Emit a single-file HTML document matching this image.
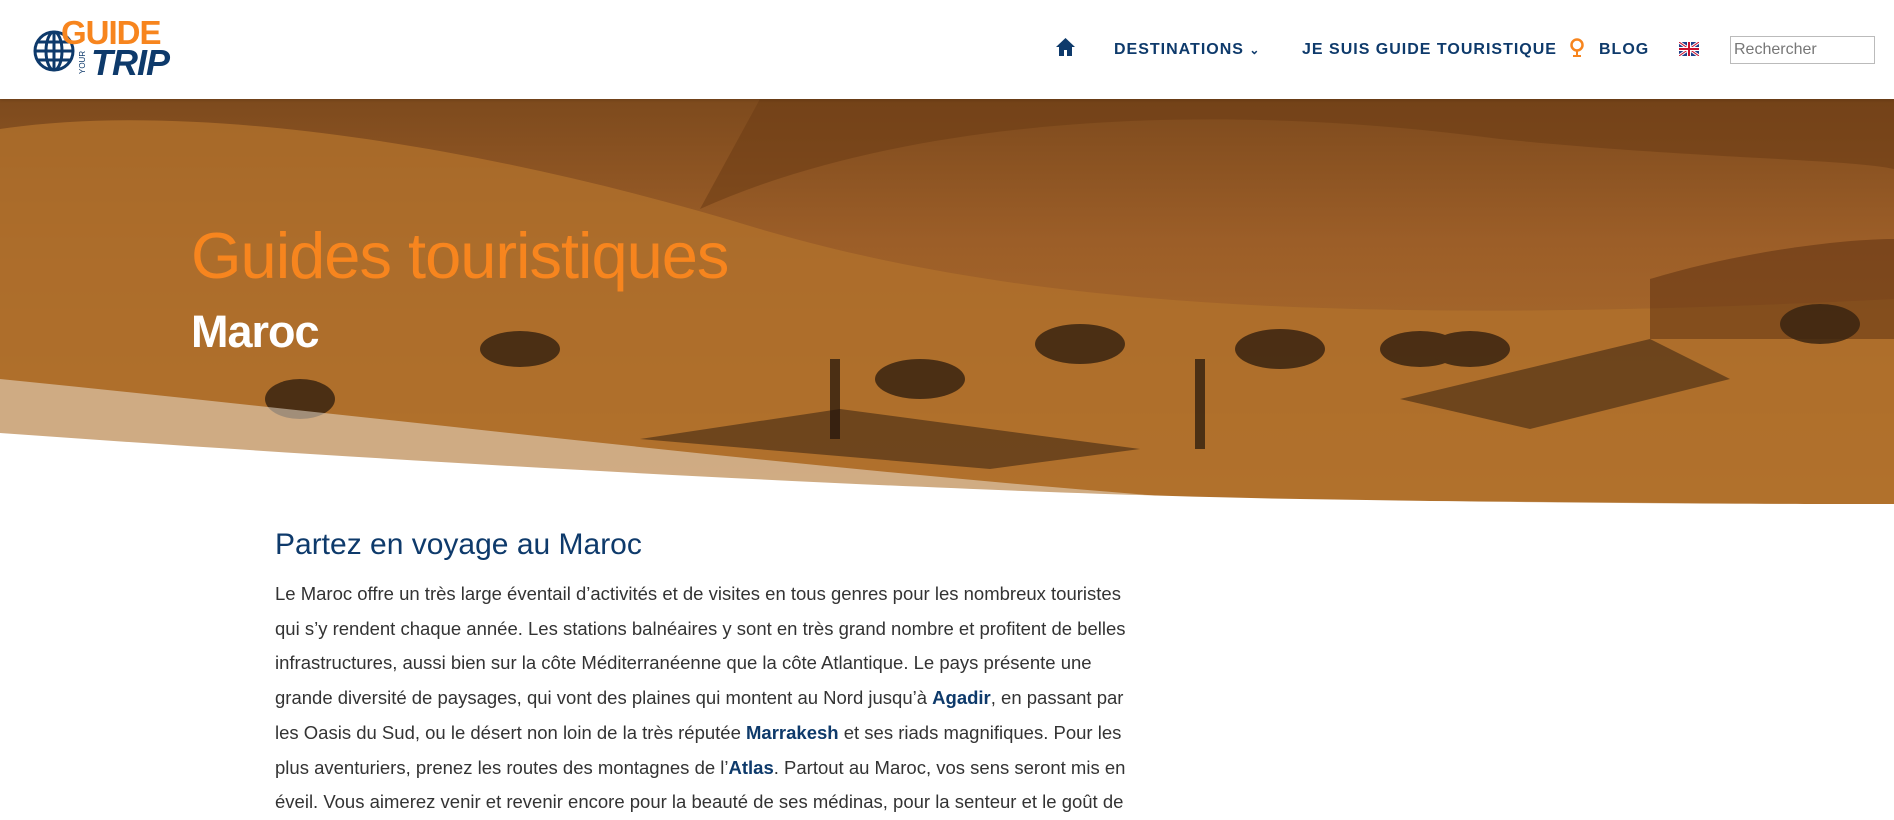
<!DOCTYPE html>
<html><head><meta charset="utf-8"><style>
*{margin:0;padding:0;box-sizing:border-box}
body{width:1894px;height:800px;overflow:hidden;background:#fff;font-family:"Liberation Sans",sans-serif;position:relative}
.hdr{position:absolute;left:0;top:0;width:1894px;height:99px;background:#fff;box-shadow:0 1px 3px rgba(0,0,0,.15);z-index:2}
.nav{position:absolute;top:41px;font-size:16px;font-weight:bold;letter-spacing:1px;color:#0e3a6b;white-space:nowrap}
.hero{position:absolute;left:0;top:99px;width:1894px;height:406px}
h1{position:absolute;left:191px;top:218px;font-size:65px;font-weight:normal;color:#f7851e;letter-spacing:-1px}
h2.m{position:absolute;left:191px;top:306px;font-size:45px;font-weight:bold;color:#fff;letter-spacing:-1px}
h3{position:absolute;left:275px;top:528px;font-size:30px;font-weight:normal;color:#0e3a6b}
p{position:absolute;left:275px;top:577px;width:870px;font-size:18.5px;line-height:34.7px;color:#333}
p b{color:#0e3a6b}
</style></head><body>
<div class="hdr">
<svg style="position:absolute;left:32px;top:29px" width="44" height="44" viewBox="0 0 44 44"><g fill="none" stroke="#0e3a6b" stroke-width="3"><circle cx="22" cy="22" r="19"/><ellipse cx="22" cy="22" rx="8" ry="19"/><line x1="22" y1="3" x2="22" y2="41"/><line x1="3" y1="22" x2="41" y2="22"/><line x1="6" y1="13" x2="38" y2="13"/><line x1="6" y1="31" x2="38" y2="31"/></g></svg>
<div style="position:absolute;left:61px;top:14px;font-size:33px;font-weight:bold;color:#f7851e;letter-spacing:-1px">GUIDE</div>
<div style="position:absolute;left:78px;font-size:8px;color:#0e3a6b;transform:rotate(-90deg);transform-origin:left top;top:74px">YOUR</div>
<div style="position:absolute;left:91px;top:42px;font-size:36px;font-weight:bold;font-style:italic;color:#0e3a6b;letter-spacing:-1px">TRIP</div>
<svg style="position:absolute;left:1055px;top:37px" width="21" height="20" viewBox="0 0 21 20"><path d="M10.5 1L1 10h3v9h5v-6h3v6h5v-9h3z" fill="#0e3a6b"/></svg>
<div class="nav" style="left:1114px">DESTINATIONS <span style="font-size:12px">&#8964;</span></div>
<div class="nav" style="left:1302px">JE SUIS GUIDE TOURISTIQUE</div>
<svg style="position:absolute;left:1569px;top:38px" width="16" height="20" viewBox="0 0 16 20"><circle cx="8" cy="7" r="5.5" fill="none" stroke="#f7851e" stroke-width="2.5"/><path d="M8 13v4M4 18h8" stroke="#f7851e" stroke-width="2"/></svg>
<div class="nav" style="left:1599px">BLOG</div>
<svg style="position:absolute;left:1679px;top:42px" width="20" height="14" viewBox="0 0 20 14"><rect width="20" height="14" fill="#1f3f8a"/><path d="M0 0L20 14M20 0L0 14" stroke="#fff" stroke-width="3"/><path d="M0 0L20 14M20 0L0 14" stroke="#c8102e" stroke-width="1"/><path d="M10 0v14M0 7h20" stroke="#fff" stroke-width="4"/><path d="M10 0v14M0 7h20" stroke="#c8102e" stroke-width="2"/></svg>
<div style="position:absolute;left:1730px;top:36px;width:145px;height:28px;border:1px solid #bbb;font-size:16px;color:#777;padding:4px 3px">Rechercher</div>
</div>
<svg class="hero" viewBox="0 0 1894 406" preserveAspectRatio="none">
<defs>
<linearGradient id="g" x1="0" y1="0" x2="0" y2="1"><stop offset="0" stop-color="#7d4a1d"/><stop offset=".35" stop-color="#9c5e28"/><stop offset="1" stop-color="#b5742e"/></linearGradient>
</defs>
<rect width="1894" height="406" fill="url(#g)"/>
<path d="M700 110C900 20 1200 0 1500 40 1700 60 1850 60 1894 70V0H760z" fill="#6e3d15" opacity=".6"/>
<path d="M0 30C200 0 500 50 760 130 1000 200 1300 230 1894 200V406H0z" fill="#b0702c" opacity=".8"/>
<path d="M1650 180C1750 150 1850 140 1894 140V240H1650z" fill="#5a2e10" opacity=".5"/>
<g fill="#3a2410" opacity=".85">
<ellipse cx="520" cy="250" rx="40" ry="18"/><ellipse cx="300" cy="300" rx="35" ry="20"/>
<ellipse cx="920" cy="280" rx="45" ry="20"/><ellipse cx="1080" cy="245" rx="45" ry="20"/>
<ellipse cx="1280" cy="250" rx="45" ry="20"/><ellipse cx="1420" cy="250" rx="40" ry="18"/>
<ellipse cx="1470" cy="250" rx="40" ry="18"/><ellipse cx="1820" cy="225" rx="40" ry="20"/>
<rect x="830" y="260" width="10" height="80"/><rect x="1195" y="260" width="10" height="90"/>
</g>
<g fill="#1f120a" opacity=".45"><path d="M640 340l200-30 300 40-150 20z"/><path d="M1400 300l250-60 80 40-200 50z"/></g>
<path d="M0 280C400 320 800 370 1200 400L1894 406H0z" fill="#e9ddcc" opacity=".55"/>
<path d="M0 334C500 370 1000 395 1300 400 1600 405 1800 405 1894 405V406H0z" fill="#fff"/>
</svg>
<h1>Guides touristiques</h1>
<h2 class="m">Maroc</h2>
<h3>Partez en voyage au Maroc</h3>
<p>Le Maroc offre un très large éventail d’activités et de visites en tous genres pour les nombreux touristes qui s’y rendent chaque année. Les stations balnéaires y sont en très grand nombre et profitent de belles infrastructures, aussi bien sur la côte Méditerranéenne que la côte Atlantique. Le pays présente une grande diversité de paysages, qui vont des plaines qui montent au Nord jusqu’à <b>Agadir</b>, en passant par les Oasis du Sud, ou le désert non loin de la très réputée <b>Marrakesh</b> et ses riads magnifiques. Pour les plus aventuriers, prenez les routes des montagnes de l’<b>Atlas</b>. Partout au Maroc, vos sens seront mis en éveil. Vous aimerez venir et revenir encore pour la beauté de ses médinas, pour la senteur et le goût de</p>
</body></html>
